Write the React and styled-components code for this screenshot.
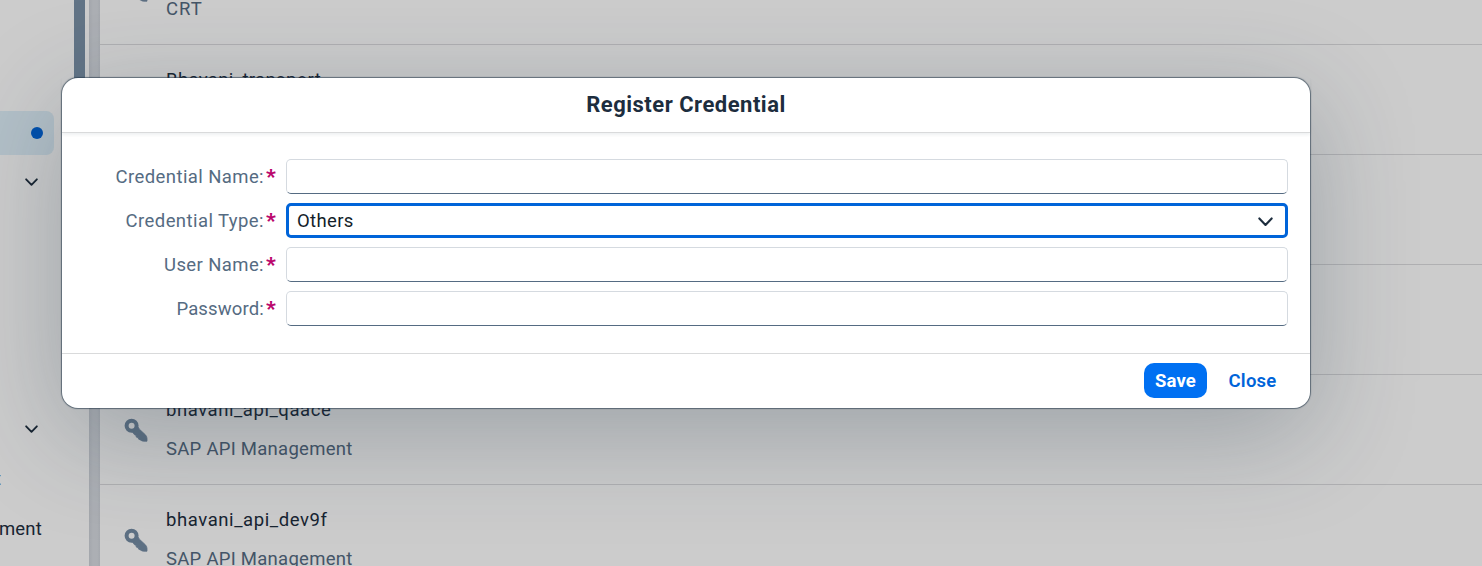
import React from "react";
import styled, { createGlobalStyle } from "styled-components";

const Global = createGlobalStyle`
  * { box-sizing: border-box; }
  body { margin: 0; overflow: hidden; font-family: Roboto, "Liberation Sans", sans-serif; font-size: 18.5px; color: #1d2d3e; }
  button, input { font: inherit; }
`;

const Page = styled.div`
  position: relative;
  display: flex;
  height: 566px;
  overflow: hidden;
  background: #fff;
`;
const SideNav = styled.nav`
  display: flex;
  width: 89px;
  flex: none;
`;
const NavItems = styled.div`
  width: 74px;
  padding-top: 111px;
  overflow: hidden;
`;
const NavItem = styled.div`
  display: flex;
  align-items: center;
  justify-content: flex-end;
  width: 54px;
  height: 44px;
  padding-right: ${(p) => p.$right ?? 11}px;
  margin-top: ${(p) => p.$gap || 0}px;
  border-radius: 0 8px 8px 0;
  background: ${(p) => (p.$selected ? "#e0f1fa" : "transparent")};
  letter-spacing: ${(p) => p.$spacing || 0}px;
  line-height: 24px;
`;
const NavTail = styled(NavItem)`
  justify-content: flex-start;
  margin-left: -5px;
  color: #556b82;
`;
const Dot = styled.span`
  width: 12px;
  height: 12px;
  border-radius: 50%;
  background: #0064d9;
`;
const ScrollThumb = styled.div`
  width: 11px;
  height: 260px;
  background: #7b91a8;
`;
const Splitter = styled.div`
  width: 11px;
  flex: none;
  background: linear-gradient(90deg, #cdd1d8, #d7dbe1 35%, #d7dbe1 75%, #cfd3da);
`;
const List = styled.main`
  flex: 1;
  margin-top: -65px;
`;
const Row = styled.div`
  display: flex;
  height: 110px;
  border-bottom: 1px solid #dcdddf;
`;
const KeySlot = styled.div`
  width: 66px;
  padding: 43px 0 0 24px;
`;
const RowText = styled.div`
  padding-top: 22px;
`;
const RowTitle = styled.div`
  height: 39px;
  line-height: 26px;
  letter-spacing: ${(p) => p.$spacing || 0}px;
`;
const RowSubtitle = styled.div`
  line-height: 26px;
  color: #556b82;
  letter-spacing: ${(p) => p.$spacing || 0}px;
`;
const Backdrop = styled.div`
  position: absolute;
  inset: 0;
  background: rgba(0, 0, 0, 0.2);
`;
const Dialog = styled.section`
  position: absolute;
  left: 62px;
  top: 78px;
  display: flex;
  flex-direction: column;
  width: 1248px;
  height: 330px;
  border-radius: 16px;
  background: #fff;
  box-shadow: 0 0 1px 1px rgba(34, 53, 72, 0.6), 0 26px 105px rgba(34, 53, 72, 0.28);
`;
const DialogHeader = styled.header`
  height: 55px;
  padding-top: 14px;
  border-bottom: 1px solid #d9dadb;
  box-shadow: 0 2px 3px rgba(34, 53, 72, 0.07);
`;
const DialogTitle = styled.h1`
  margin: 0;
  text-align: center;
  font-size: 22px;
  line-height: 26px;
  font-weight: 700;
  letter-spacing: 0.5px;
`;
const Form = styled.div`
  display: flex;
  flex-direction: column;
  gap: 9px;
  flex: 1;
  padding: 26px 22px 0 0;
`;
const FieldRow = styled.label`
  display: flex;
  align-items: center;
  height: 35px;
`;
const FieldLabel = styled.span`
  display: flex;
  justify-content: flex-end;
  width: 224px;
  padding-right: 10px;
  color: #556b82;
  line-height: 26px;
  letter-spacing: ${(p) => p.$spacing}px;
`;
const Required = styled.span`
  width: 12px;
  padding-left: 2px;
  color: #ba066c;
  font-size: 21px;
  font-weight: 900;
  letter-spacing: 0;
`;
const Field = styled.input`
  flex: 1;
  height: 35px;
  padding: 0 10px;
  border: 1px solid #d5dae0;
  border-bottom-color: #556b82;
  border-radius: 5px;
  background: #fff;
  outline: none;
`;
const Select = styled.div`
  display: flex;
  align-items: center;
  justify-content: space-between;
  flex: 1;
  height: 35px;
  padding: 0 12px 0 8px;
  border: 3px solid #0064d9;
  border-radius: 5px;
  color: #131e29;
  letter-spacing: 0.35px;
  svg { margin-top: 2px; }
`;
const DialogFooter = styled.footer`
  display: flex;
  justify-content: flex-end;
  gap: 10px;
  height: 55px;
  padding: 9px 22px 0 0;
  border-top: 1px solid #d9dadb;
`;
const Button = styled.button`
  height: 35px;
  width: ${(p) => (p.$primary ? 63 : 71)}px;
  padding: 0;
  border: 0;
  border-radius: 10px;
  background: ${(p) => (p.$primary ? "#0070f2" : "transparent")};
  color: ${(p) => (p.$primary ? "#fff" : "#0064d9")};
  font-weight: ${(p) => (p.$primary ? 700 : 600)};
  letter-spacing: ${(p) => (p.$primary ? 0.1 : 0.2)}px;
`;

const Chevron = ({ width = 13 }) => (
  <svg width={width} height={width * 0.64} viewBox="0 0 14 9" fill="none">
    <path d="M1.2 1.4 7 7.4l5.8-6" stroke="#1d2d3e" strokeWidth="2" strokeLinecap="round" strokeLinejoin="round" />
  </svg>
);

const KeyIcon = () => (
  <svg width="24" height="24" viewBox="0 0 24 24" fill="none">
    <circle cx="7.6" cy="7.8" r="5" stroke="#758ca4" strokeWidth="4" />
    <path d="M8.6 14.2 14 9 15.4 11.2 21.4 16.8Q23 18.6 23 20.4V23.2H19.8Q18 23.2 16.8 22.2L14.4 21V19.8L12.2 19V17.4L10.6 16.8Z" fill="#758ca4" stroke="#758ca4" strokeWidth="0.8" strokeLinejoin="round" />
  </svg>
);

const rows = [
  { title: "", subtitle: "CRT", subtitleSpacing: 1 },
  { title: "Bhavani_transport", subtitle: "", titleSpacing: 0.35 },
  { title: "", subtitle: "" },
  { title: "", subtitle: "" },
  { title: "bhavani_api_qaace", subtitle: "SAP API Management", titleSpacing: 0.55, subtitleSpacing: 0.27 },
  { title: "bhavani_api_dev9f", subtitle: "SAP API Management", titleSpacing: 0.58, subtitleSpacing: 0.27 },
];

const FormField = ({ label, spacing, children }) => (
  <FieldRow>
    <FieldLabel $spacing={spacing}>
      {label}:<Required>*</Required>
    </FieldLabel>
    {children || <Field />}
  </FieldRow>
);

export default function App() {
  return (
    <>
      <Global />
      <Page>
        <SideNav>
          <NavItems>
            <NavItem $selected $right={11}><Dot /></NavItem>
            <NavItem $gap={5} $right={16}><Chevron /></NavItem>
            <NavItem $gap={203} $right={16}><Chevron /></NavItem>
            <NavTail $gap={6}>t</NavTail>
            <NavItem $gap={6} $right={12} $spacing={0.2}>ment</NavItem>
          </NavItems>
          <ScrollThumb />
        </SideNav>
        <Splitter />
        <List>
          {rows.map((row, i) => (
            <Row key={i}>
              <KeySlot><KeyIcon /></KeySlot>
              <RowText>
                <RowTitle $spacing={row.titleSpacing}>{row.title}</RowTitle>
                <RowSubtitle $spacing={row.subtitleSpacing}>{row.subtitle}</RowSubtitle>
              </RowText>
            </Row>
          ))}
        </List>
        <Backdrop />
        <Dialog role="dialog">
          <DialogHeader><DialogTitle>Register Credential</DialogTitle></DialogHeader>
          <Form>
            <FormField label="Credential Name" spacing={0.41} />
            <FormField label="Credential Type" spacing={0.43}>
              <Select>Others<Chevron width={15} /></Select>
            </FormField>
            <FormField label="User Name" spacing={0.4} />
            <FormField label="Password" spacing={0.15} />
          </Form>
          <DialogFooter>
            <Button $primary>Save</Button>
            <Button>Close</Button>
          </DialogFooter>
        </Dialog>
      </Page>
    </>
  );
}
